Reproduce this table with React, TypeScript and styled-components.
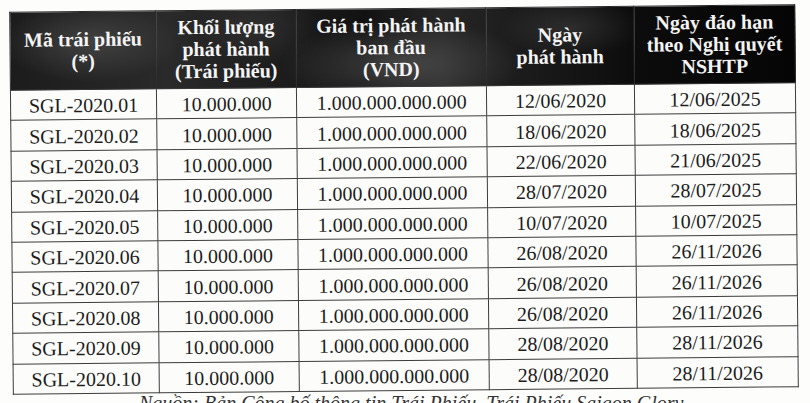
import React from "react";
import styled, { createGlobalStyle } from "styled-components";

const GlobalStyle = createGlobalStyle`
  html, body {
    margin: 0;
    padding: 0;
    background: #fdfdfc;
  }
  body {
    width: 810px;
    height: 403px;
    overflow: hidden;
    font-family: "Liberation Serif", "Times New Roman", serif;
  }
`;

const rows = [
  ["SGL-2020.01", "12/06/2020", "12/06/2025"],
  ["SGL-2020.02", "18/06/2020", "18/06/2025"],
  ["SGL-2020.03", "22/06/2020", "21/06/2025"],
  ["SGL-2020.04", "28/07/2020", "28/07/2025"],
  ["SGL-2020.05", "10/07/2020", "10/07/2025"],
  ["SGL-2020.06", "26/08/2020", "26/11/2026"],
  ["SGL-2020.07", "26/08/2020", "26/11/2026"],
  ["SGL-2020.08", "26/08/2020", "26/11/2026"],
  ["SGL-2020.09", "28/08/2020", "28/11/2026"],
  ["SGL-2020.10", "28/08/2020", "28/11/2026"],
];

const widths = [146, 140, 190, 148, 161];

const Page = styled.div`
  display: flex;
  flex-direction: column;
  padding: 8px 0 0 11px;
`;

const Sheet = styled.table`
  width: 785px;
  border-collapse: collapse;
  table-layout: fixed;
  transform: rotate(-0.55deg);
  transform-origin: center;
`;

const HeadRow = styled.tr`
  height: 78px;
  background:
    radial-gradient(ellipse 90px 40px at 80px 30px, rgba(90, 90, 90, 0.55), transparent),
    radial-gradient(ellipse 120px 45px at 390px 55px, rgba(110, 110, 110, 0.5), transparent),
    radial-gradient(ellipse 70px 30px at 560px 20px, rgba(80, 80, 80, 0.4), transparent),
    radial-gradient(ellipse 60px 40px at 250px 15px, rgba(70, 70, 70, 0.4), transparent),
    linear-gradient(90deg, #1c1c1c 0%, #2a2a2a 20%, #121212 45%, #262626 55%, #0c0c0c 80%, #050505 100%);
`;

const HeadCell = styled.th`
  color: #f4f4f4;
  font-weight: 700;
  font-size: 20px;
  line-height: 22px;
  text-align: center;
  vertical-align: middle;
  padding: 2px 4px 4px;
  border: 1.5px solid #2a2a2a;
  border-bottom-color: #3a3a3a;
`;

const BodyRow = styled.tr`
  height: 30.4px;
`;

const Cell = styled.td`
  color: #1d1d1d;
  font-size: 20px;
  line-height: 22px;
  text-align: center;
  vertical-align: middle;
  padding: 1px 4px 0;
  border: 1.5px solid #3c3c3c;
  background: #fcfcfb;
`;

const Caption = styled.div`
  margin: 1px 0 0 128px;
  font-style: italic;
  font-size: 20px;
  line-height: 22px;
  color: #333;
  white-space: nowrap;
`;

export default function App() {
  return (
    <Page>
      <GlobalStyle />
      <Sheet>
        <colgroup>
          {widths.map((w, i) => (
            <col key={i} style={{ width: w }} />
          ))}
        </colgroup>
        <thead>
          <HeadRow>
            <HeadCell>
              Mã trái phiếu
              <br />
              (*)
            </HeadCell>
            <HeadCell>
              Khối lượng
              <br />
              phát hành
              <br />
              (Trái phiếu)
            </HeadCell>
            <HeadCell>
              Giá trị phát hành
              <br />
              ban đầu
              <br />
              (VND)
            </HeadCell>
            <HeadCell>
              Ngày
              <br />
              phát hành
            </HeadCell>
            <HeadCell>
              Ngày đáo hạn
              <br />
              theo Nghị quyết
              <br />
              NSHTP
            </HeadCell>
          </HeadRow>
        </thead>
        <tbody>
          {rows.map(([code, issued, due]) => (
            <BodyRow key={code}>
              <Cell>{code}</Cell>
              <Cell>10.000.000</Cell>
              <Cell>1.000.000.000.000</Cell>
              <Cell>{issued}</Cell>
              <Cell>{due}</Cell>
            </BodyRow>
          ))}
        </tbody>
      </Sheet>
      <Caption>Nguồn: Bản Công bố thông tin Trái Phiếu, Trái Phiếu Saigon Glory</Caption>
    </Page>
  );
}
